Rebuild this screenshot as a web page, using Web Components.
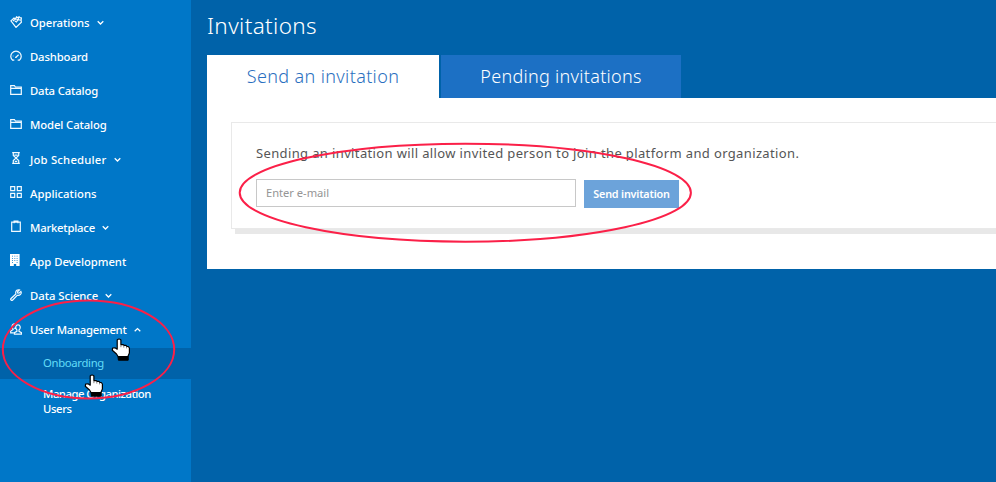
<!DOCTYPE html>
<html lang="en">
<head>
<meta charset="utf-8">
<title>Invitations</title>
<style>
html,body{margin:0;height:100%;overflow:hidden;background:#0062a9}
body{font-family:"Noto Sans","Open Sans",sans-serif}
</style>
</head>
<body>
<app-shell></app-shell>
<script>
const make = (host, html) => { host.attachShadow({mode:'open'}).innerHTML = html; };

// Text run whose tracking is adjusted to fill a given width
customElements.define('fit-text', class extends HTMLElement {
  connectedCallback(){
    make(this, '<style>:host{display:inline-block;white-space:nowrap;flex:none}span{display:inline-block}</style><span><slot></slot></span>');
    const s = this.shadowRoot.querySelector('span');
    const target = +this.getAttribute('w'), n = this.textContent.length;
    s.style.letterSpacing = ((target - s.getBoundingClientRect().width) / n) + 'px';
  }
});

const icons = {
  tag:'<path d="M.9 4.9 4 2 5.4 3 6.5.9 8.2 1.8 9 .7l1 1 1.4.2-.3 2.2.3 2.2L6 11.4zM3 5l2.4-2M4.8 5l1.6 1 2-2.8M6.6 2.8l.8 1.4M8.2 1.8l.6 2L11 4.1"/>',
  gauge:'<path d="M2.9 10.5A5.2 5.2 0 1 1 9.1 10.5M2.3 10.2h2M7.7 10.2h2M6 7.2l2.6-2.4M5.1 7.4h1.6M2.8 6h.6"/>',
  folder:'<path d="M.7 10.4V1.6h3.7l1 1.4h5.9v7.4zM.7 4.4h10.6"/>',
  hourglass:'<path d="M2.2.7h7.6M2.2 11.3h7.6M3.3.7v2.8L6 6l2.7-2.5V.7M3.3 11.3V8.5L6 6l2.7 2.5v2.8M4.4 3.2h3.2M4.8 9.3h2.4"/>',
  grid:'<path d="M.7.7h4v4h-4zM7.3.7h4v4h-4zM.7 7.3h4v4h-4zM7.3 7.3h4v4h-4z"/>',
  bag:'<path d="M1.7 2.2h8.6v9.1H1.7zM4.1 3.2V1h3.8v2.2"/>',
  building:'<path fill="#fff" stroke="none" fill-rule="evenodd" d="M0 0h9.6v12H6.2v-2H3.8v2H0zM2 1.8v.8h1v-.8zm2.3 0v.8h1v-.8zm2.3 0v.8h1v-.8zM2 4v.8h1V4zm2.3 0v.8h1V4zm2.3 0v.8h1V4zM2 6.2V7h1v-.8zm2.3 0V7h1v-.8zm2.3 0V7h1v-.8zM2 8.3v.8h1v-.8zm4.6 0v.8h1v-.8z"/>',
  wrench:'<path d="M10.9 2.4 9 4.2 7.7 3.9 7.5 2.7 9.4.9C7.6.3 5.6 1.5 5.7 3.8L5.9 5 .8 9.7c-.5.8.8 2.1 1.7 1.5L7.2 6.3c2.8.7 4.8-1.7 3.7-3.9z"/>',
  users:'<path d="M4.4 11.2h7V9.6L9 8.3V7c2-1.8 1.4-5.2-1-5.2S5 5.2 6.9 7v1.3L4.4 9.6zM5.6 1.2C3.3.2 1.8 2 2.2 4.1c.2 1 .9 1.7 1 2.4L.7 8.1v1.8h3M5 4.5 4.8 6"/>'
};

customElements.define('ui-icon', class extends HTMLElement {
  connectedCallback(){
    make(this, `<style>:host{display:block;width:12px;height:12px;flex:none}svg{display:block}</style>
    <svg width="12" height="12" viewBox="0 0 12 12" fill="none" stroke="#f2faff" stroke-width="1.2">${icons[this.getAttribute('name')]}</svg>`);
  }
});

customElements.define('nav-item', class extends HTMLElement {
  connectedCallback(){
    const dir = this.getAttribute('arrow');
    const d = dir === 'up' ? 'M.7 4.2 3.5 1.5 6.3 4.2' : 'M.7 1.2 3.5 4 6.3 1.2';
    make(this, `<style>
    :host{display:flex;align-items:center;height:34.14px;padding-left:10px;color:#fff;font-size:11.3px;font-weight:500;line-height:16px}
    ui-icon{margin:-3px 8px 0 0} .arrow{margin-left:7px;margin-top:-1px}</style>
    <ui-icon name="${this.getAttribute('icon')}"></ui-icon><fit-text w="${this.getAttribute('w')}">${this.textContent}</fit-text>
    ${dir ? `<svg class="arrow" width="7" height="5" viewBox="0 0 7 5" fill="none" stroke="#fff" stroke-width="1.25"><path d="${d}"/></svg>` : ''}`);
  }
});

customElements.define('side-nav', class extends HTMLElement {
  connectedCallback(){
    make(this, `<style>
    :host{display:block;box-sizing:border-box;width:191px;height:482px;padding-top:6px;background:#0077c8;flex:none}
    .sub{box-sizing:border-box;font-size:11.3px;font-weight:500;color:#fff;line-height:15px;padding-left:43px}
    .active{display:flex;align-items:center;height:31px;padding-bottom:2px;background:#0062a9;color:#62dcf8;margin-top:.6px;font-weight:400}
    .last{padding-top:7px}.last fit-text{display:block}</style>
    <nav>
    <nav-item icon="tag" w="59.5" arrow="down">Operations</nav-item>
    <nav-item icon="gauge" w="58">Dashboard</nav-item>
    <nav-item icon="folder" w="68">Data Catalog</nav-item>
    <nav-item icon="folder" w="76.7">Model Catalog</nav-item>
    <nav-item icon="hourglass" w="76.5" arrow="down">Job Scheduler</nav-item>
    <nav-item icon="grid" w="66.5">Applications</nav-item>
    <nav-item icon="bag" w="65" arrow="down">Marketplace</nav-item>
    <nav-item icon="building" w="96.2">App Development</nav-item>
    <nav-item icon="wrench" w="68.3" arrow="down">Data Science</nav-item>
    <nav-item icon="users" w="96.5" arrow="up">User Management</nav-item>
    <div class="sub active"><fit-text w="61">Onboarding</fit-text></div>
    <div class="sub last"><fit-text w="107.8">Manage Organization</fit-text><fit-text w="28.7">Users</fit-text></div>
    </nav>`);
  }
});

customElements.define('tab-button', class extends HTMLElement {
  connectedCallback(){
    make(this, `<style>
    :host{display:flex;justify-content:center;box-sizing:border-box;width:240px;height:43px;padding-top:7px;background:#1c70c4;color:#fff;font-size:18px;font-weight:350;line-height:28px}
    :host([active]){width:232px;background:#fff;color:#2a6fc0}</style><slot></slot>`);
  }
});

customElements.define('invite-form', class extends HTMLElement {
  connectedCallback(){
    make(this, `<style>
    :host{display:block;box-sizing:border-box;height:107px;margin-left:24px;padding:20px 0 0 24px;border:1px solid #e9e9e9;border-right:0;background:#fff;box-shadow:4px 5px 0 #e8e8e8}
    p{margin:0;height:20px;font-size:13px;line-height:20px;color:#555}
    .row{display:flex;gap:8px;margin-top:16px}
    .field{box-sizing:border-box;width:320px;height:28px;border:1px solid #c8c8c8;padding-left:9px;font-size:11.2px;line-height:26px;color:#959595}
    .send{width:95px;height:28px;margin-top:1px;border:0;padding:0;background:#6ca3da;color:#fff;font:600 10.8px/28px "Noto Sans",sans-serif;text-align:center}</style>
    <p><fit-text w="543.3">Sending an invitation will allow invited person to join the platform and organization.</fit-text></p>
    <div class="row"><div class="field"><fit-text w="63">Enter e-mail</fit-text></div><button class="send"><fit-text w="76.5">Send invitation</fit-text></button></div>`);
  }
});

customElements.define('invitations-page', class extends HTMLElement {
  connectedCallback(){
    make(this, `<style>
    :host{display:block;flex:1;padding-left:16px;min-width:0;background:#0062a9}
    h1{margin:0;height:55px;padding-top:10px;box-sizing:border-box;color:#fff;font-size:22.5px;font-weight:350;line-height:32px}
    .tabs{display:flex;gap:2px}.panel{box-sizing:border-box;height:171px;background:#fff;padding-top:24px}</style>
    <h1><fit-text w="110">Invitations</fit-text></h1>
    <div class="tabs"><tab-button active><fit-text w="152.5">Send an invitation</fit-text></tab-button><tab-button><fit-text w="161.5">Pending invitations</fit-text></tab-button></div>
    <div class="panel"><invite-form></invite-form></div>`);
  }
});

customElements.define('hand-pointer', class extends HTMLElement {
  connectedCallback(){
    make(this, `<style>:host{display:block;width:20px;height:23px}svg{display:block}</style>
    <svg width="20" height="23" viewBox="0 0 20 23"><path d="M7 18.5h10.2v3.7H7.4z" fill="#000" stroke="#000" stroke-linejoin="round"/><path d="M6.2 2Q8 0 9.9 2V6.6L12 6.5 13 7.3 15 7.4 15.8 8.4 17.3 8.5 18.4 10V15L16.8 18.7H7.2L5.5 16 1.3 12.3 1.6 10 4 9.8 6.2 11.2z" fill="#fff" stroke="#000" stroke-width="1.2" stroke-linejoin="round"/><path d="M9.9 7v2.2M12.8 7.6v2M15.6 8.6v1.8" stroke="#333" stroke-width=".6"/></svg>`);
  }
});

customElements.define('app-shell', class extends HTMLElement {
  connectedCallback(){
    make(this, `<style>
    :host{display:flex;position:relative;width:996px;height:482px;overflow:hidden}
    .marks{position:absolute;inset:0;pointer-events:none}
    hand-pointer{position:absolute}.one{left:111px;top:338px}.two{left:84px;top:374px}</style>
    <side-nav></side-nav><invitations-page></invitations-page>
    <svg class="marks" width="996" height="482" fill="none" stroke="#fb2048" stroke-width="2"><ellipse cx="88.5" cy="349.5" rx="85.7" ry="49"/><ellipse cx="465.3" cy="192.7" rx="225.6" ry="49"/></svg>
    <hand-pointer class="one"></hand-pointer><hand-pointer class="two"></hand-pointer>`);
  }
});
</script>
</body>
</html>
